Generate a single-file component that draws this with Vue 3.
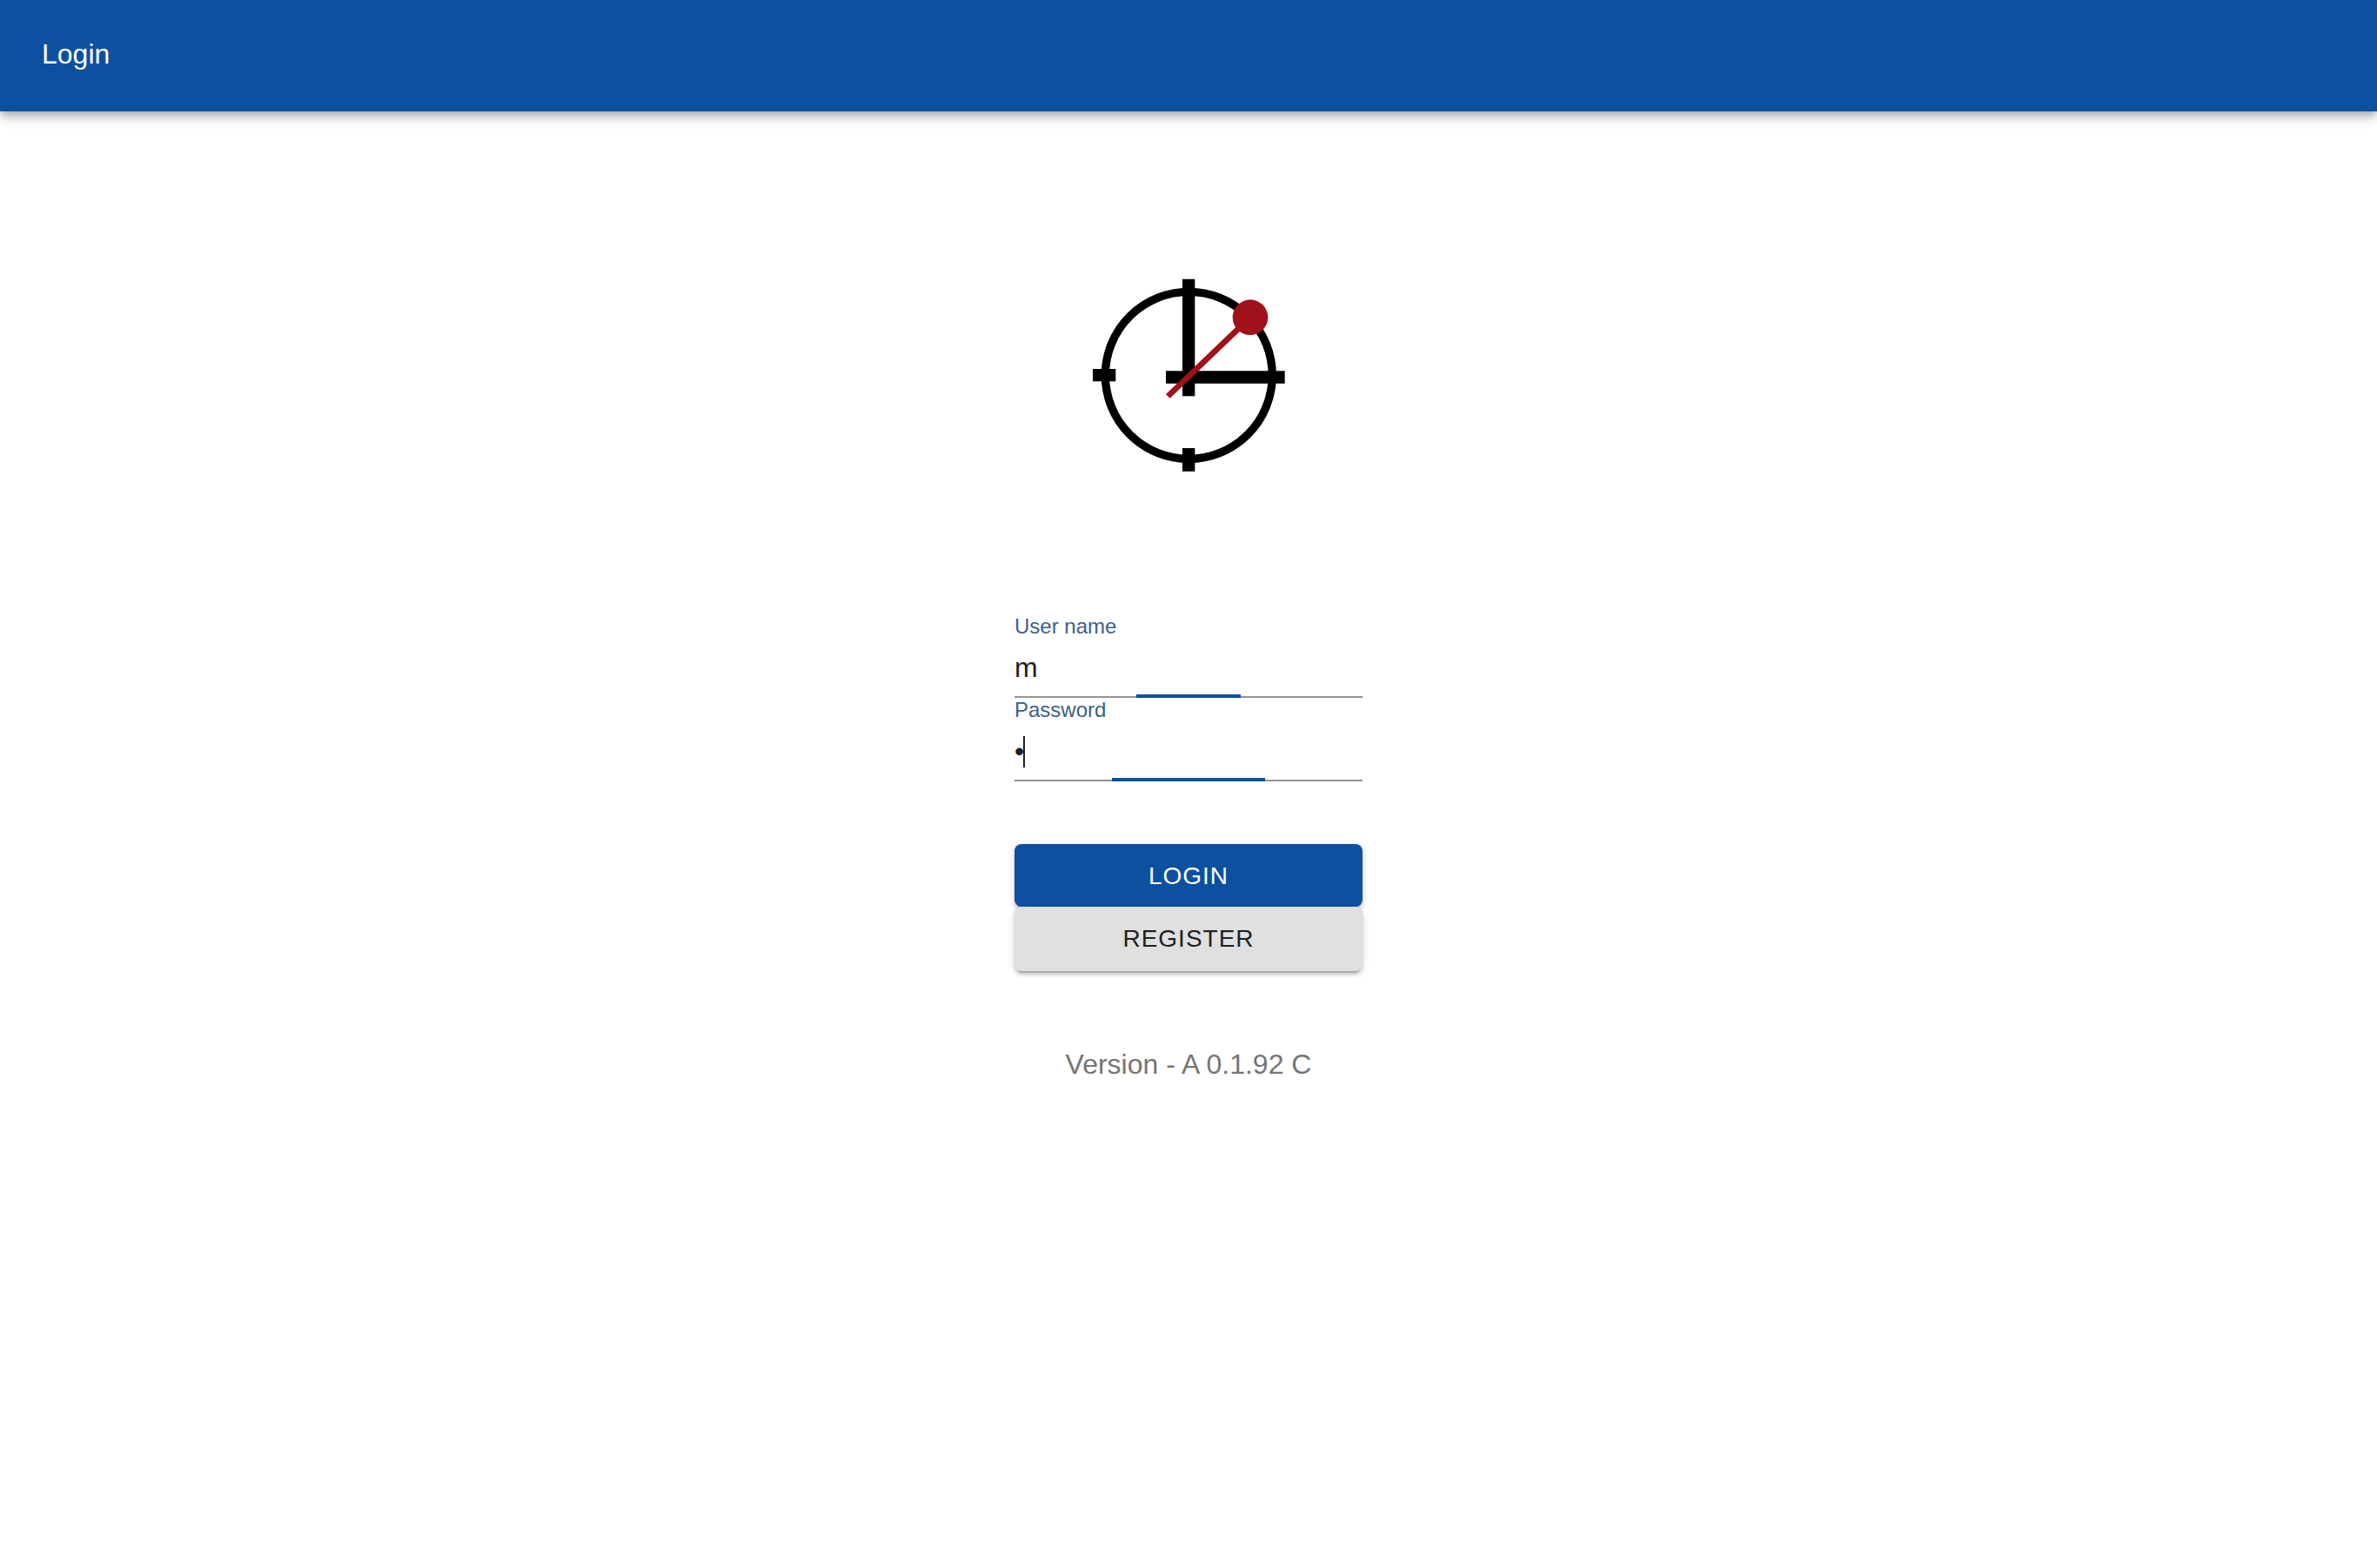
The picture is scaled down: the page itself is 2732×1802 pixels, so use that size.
<script setup>
import { ref } from 'vue'

const username = ref('m')
const password = ref('m')
</script>

<template>
  <div class="page">
    <header class="app-bar">
      <h1 class="title">Login</h1>
    </header>
    <main class="content">
      <svg class="logo" viewBox="-12 0 780 780" role="img" aria-label="Clock">
        <circle cx="379" cy="394" r="288" fill="none" stroke="#000" stroke-width="28" />
        <path d="M357 62h43v404h-43zM300 379h410v43H300zM48 372h79v43H48zM357 645h43v80h-43z" />
        <path d="M307 466L590 195" fill="none" stroke="#a01219" stroke-width="20" />
        <circle cx="591" cy="194" r="61" fill="#a01219" />
      </svg>
      <form class="form" @submit.prevent>
        <div class="field">
          <label for="username">User name</label>
          <input id="username" v-model="username" type="text" autocomplete="off" />
          <span class="underline underline-leaving"></span>
        </div>
        <div class="field">
          <label for="password">Password</label>
          <input id="password" v-model="password" type="password" autocomplete="off" />
          <span class="caret"></span>
          <span class="underline underline-entering"></span>
        </div>
        <div class="actions">
          <button class="button primary" type="submit">LOGIN</button>
          <button class="button secondary" type="button">REGISTER</button>
        </div>
      </form>
      <p class="version">Version - A 0.1.92 C</p>
    </main>
  </div>
</template>

<style>
body {
  margin: 0;
  background: #fff;
}
</style>

<style scoped>
.page {
  font-family: "Liberation Sans", Arial, sans-serif;
  color: #212121;
}
.app-bar {
  display: flex;
  align-items: center;
  height: 128px;
  padding: 0 48px 4px;
  box-sizing: border-box;
  background: #0d50a0;
  color: #fff;
  box-shadow: 0 4px 8px -2px rgba(0, 0, 0, 0.2), 0 8px 10px rgba(0, 0, 0, 0.14),
    0 2px 20px rgba(0, 0, 0, 0.12);
}
.title {
  margin: 0;
  font-size: 32px;
  font-weight: 400;
  line-height: 48px;
}
.content {
  display: flex;
  flex-direction: column;
  align-items: center;
  padding: 172px 32px 64px;
}
.logo {
  width: 260px;
  height: 260px;
}
.form {
  width: 100%;
  max-width: 400px;
  margin-top: 144px;
}
.field {
  position: relative;
  display: flex;
  flex-direction: column;
  justify-content: space-between;
  height: 96px;
}
.field:first-child {
  height: 98px;
}
.field + .field {
  margin-top: -2px;
  height: 98px;
}
.field label {
  font-size: 24px;
  line-height: 32px;
  color: #3b5f8a;
}
.field input {
  height: 64px;
  box-sizing: border-box;
  padding: 0 0 4px;
  border: 0;
  border-bottom: 2px solid #949494;
  border-radius: 0;
  outline: 0;
  background: transparent;
  color: inherit;
  font: inherit;
  font-size: 32px;
  caret-color: transparent;
}
.underline {
  position: absolute;
  bottom: 0;
  left: 50%;
  height: 4px;
  transform: translateX(-50%);
  background: #0d50a0;
}
.underline-leaving {
  width: 30%;
}
.underline-entering {
  width: 44%;
}
.caret {
  position: absolute;
  left: 10px;
  bottom: 16px;
  width: 2px;
  height: 36px;
  background: #212121;
}
.actions {
  display: flex;
  flex-direction: column;
  margin-top: 72px;
}
.button {
  height: 72px;
  padding: 2px 32px 0;
  border: 0;
  border-radius: 8px;
  font: inherit;
  font-size: 28px;
  letter-spacing: 1px;
  box-shadow: 0 6px 2px -4px rgba(0, 0, 0, 0.2), 0 4px 4px rgba(0, 0, 0, 0.14),
    0 2px 10px rgba(0, 0, 0, 0.12);
}
.primary {
  background: #0d50a0;
  color: #fff;
}
.secondary {
  height: 74px;
  padding: 0 32px;
  background: #e0e0e0;
  color: #212121;
}
.version {
  margin: 83px 0 0;
  font-size: 32px;
  line-height: 48px;
  color: #757575;
}
</style>
